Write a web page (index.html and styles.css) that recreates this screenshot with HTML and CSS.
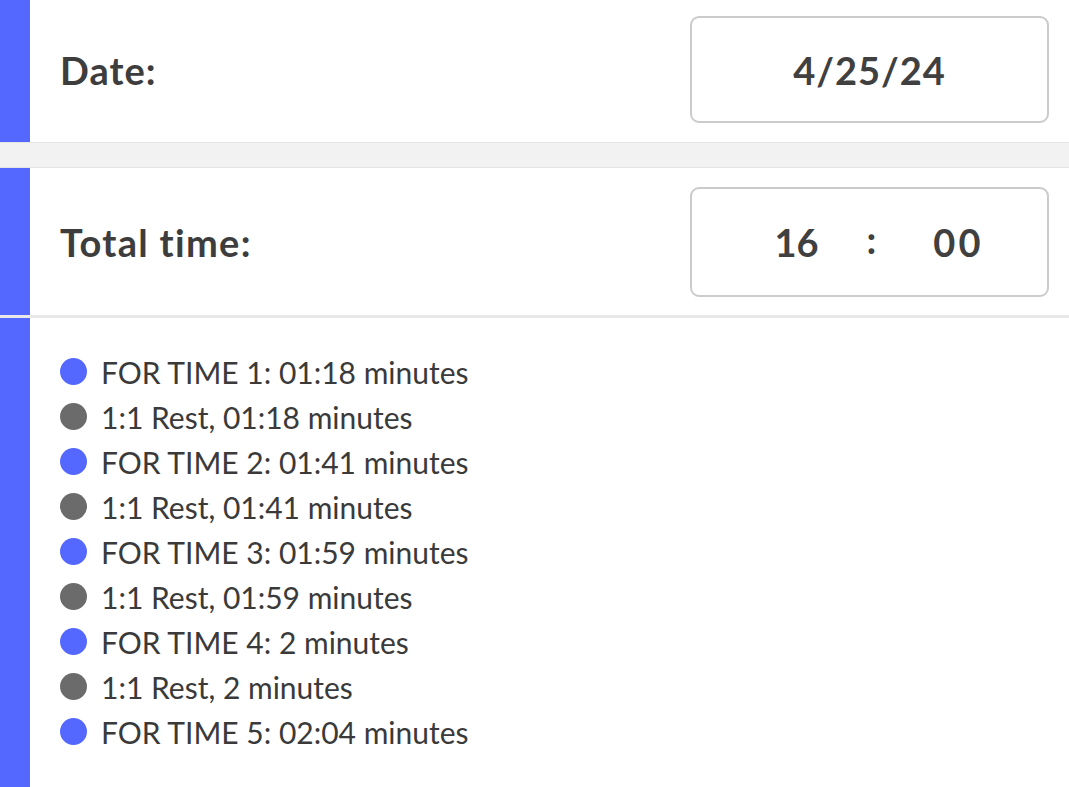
FILE: index.html
```html
<!DOCTYPE html>
<html>
<head>
<meta charset="utf-8">
<link rel="stylesheet" href="styles.css">
</head>
<body>
<div class="page">
  <section class="row row-date">
    <div class="label">Date:</div>
    <div class="field"><span class="value">4/25/24</span></div>
  </section>
  <div class="sep"></div>
  <section class="row row-time">
    <div class="label">Total time:</div>
    <div class="field time-field">
      <span class="tpart hours">16</span>
      <span class="tcolon">:</span>
      <span class="tpart mins">00</span>
    </div>
  </section>
  <div class="rule"></div>
  <section class="list-wrap">
    <ul class="steps">
      <li class="step work">FOR TIME 1: 01:18 minutes</li>
      <li class="step rest">1:1 Rest, 01:18 minutes</li>
      <li class="step work">FOR TIME 2: 01:41 minutes</li>
      <li class="step rest">1:1 Rest, 01:41 minutes</li>
      <li class="step work">FOR TIME 3: 01:59 minutes</li>
      <li class="step rest">1:1 Rest, 01:59 minutes</li>
      <li class="step work">FOR TIME 4: 2 minutes</li>
      <li class="step rest">1:1 Rest, 2 minutes</li>
      <li class="step work">FOR TIME 5: 02:04 minutes</li>
    </ul>
  </section>
</div>
</body>
</html>
```
FILE: styles.css
```css
html, body {
  margin: 0;
  padding: 0;
  background: #ffffff;
}
body {
  font-family: Lato, "Open Sans", sans-serif;
  color: #3c3c3c;
}
.page {
  width: 1069px;
  height: 787px;
  overflow: hidden;
  display: flex;
  flex-direction: column;
}
.row {
  display: flex;
  align-items: center;
  justify-content: space-between;
  border-left: 30px solid #5468ff;
  padding: 0 20px 0 30px;
  box-sizing: border-box;
}
.row-date {
  height: 142px;
  padding-bottom: 3px;
}
.row-time {
  height: 147px;
}
.label {
  font-size: 38px;
  font-weight: 700;
  color: #3d3d3d;
  letter-spacing: 1px;
}
.row-time .label {
  letter-spacing: 1.3px;
}
.field {
  width: 359px;
  box-sizing: border-box;
  border: 2px solid #cbcbcb;
  border-radius: 9px;
  display: flex;
  align-items: center;
  justify-content: center;
  font-weight: 700;
  color: #404040;
}
.row-date .field {
  height: 107px;
}
.value {
  font-size: 38px;
  letter-spacing: 1px;
}
.time-field {
  height: 110px;
  font-size: 38px;
  padding-left: 16px;
}
.tpart {
  width: 60px;
  text-align: center;
}
.hours {
  margin-right: 40px;
}
.mins {
  margin-left: 52px;
  letter-spacing: 3px;
}
.tcolon {
  position: relative;
  top: -3px;
}
.sep {
  height: 26px;
  box-sizing: border-box;
  background: #f2f2f2;
  border-top: 1px solid #e3e3e3;
  border-bottom: 1px solid #e3e3e3;
}
.rule {
  height: 3px;
  background: #e8e8e8;
}
.list-wrap {
  flex: 1;
  border-left: 30px solid #5468ff;
  padding: 31px 0 0 30px;
}
.steps {
  list-style: none;
  margin: 0;
  padding: 0;
}
.step {
  display: flex;
  align-items: center;
  height: 45px;
  font-size: 30px;
  color: #3a3a3a;
}
.step::before {
  content: "";
  width: 27px;
  height: 27px;
  border-radius: 50%;
  margin-right: 14px;
  flex: none;
}
.step.work::before {
  background: #5468ff;
}
.step.rest::before {
  background: #6b6b6b;
}
```
